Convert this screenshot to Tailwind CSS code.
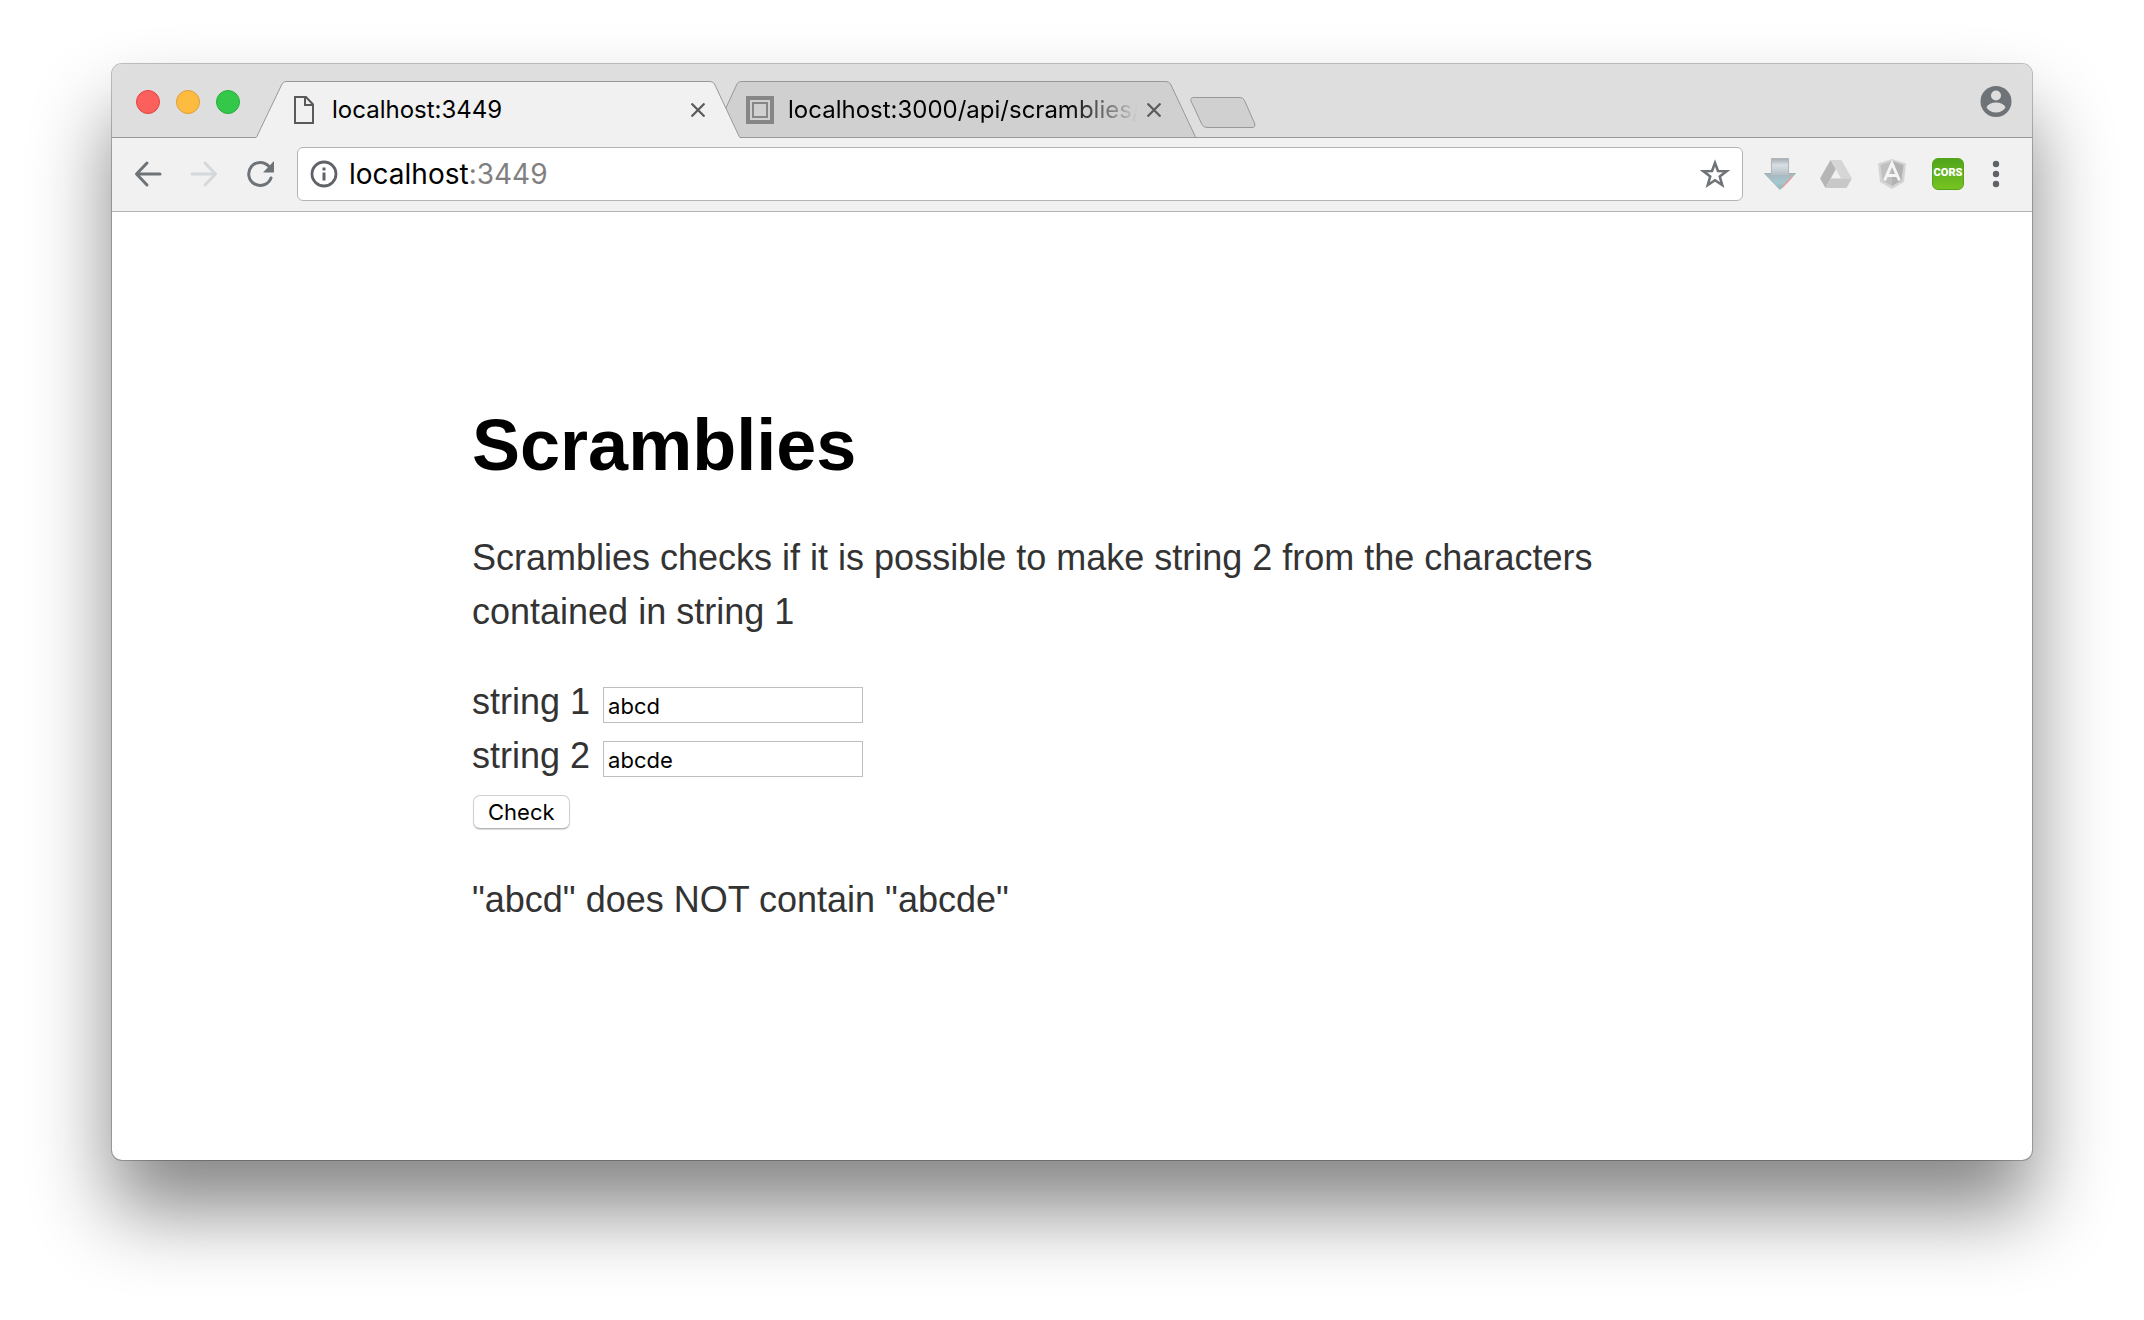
<!DOCTYPE html>
<html lang="en">
<head>
<meta charset="utf-8">
<title>Scramblies</title>
<script src="https://cdn.jsdelivr.net/npm/@tailwindcss/browser@4"></script>
</head>
<body class="min-h-screen bg-white px-28 pt-16 pb-40 font-['Inter',sans-serif]">
<div class="overflow-hidden rounded-[10px] bg-white shadow-[0_0_0_1px_rgba(0,0,0,0.24),0_50px_80px_rgba(0,0,0,0.48)]">

  <!-- Tab strip -->
  <header class="flex h-[74px] items-start border-b border-[#989898] bg-[#dedede]">
    <div class="flex h-[76px] shrink-0 items-center gap-4 pr-4 pl-6">
      <button type="button" aria-label="Close window" class="size-6 rounded-full border border-[#e0443f] bg-[#fc605c]"></button>
      <button type="button" aria-label="Minimize window" class="size-6 rounded-full border border-[#dfa035] bg-[#fdbc40]"></button>
      <button type="button" aria-label="Zoom window" class="size-6 rounded-full border border-[#2aac3c] bg-[#34c84a]"></button>
    </div>
    <nav class="mt-[17px] flex items-start" aria-label="Tabs">
      <div class="relative z-10 flex h-[57px] w-[484px] items-center pr-5 pl-[37px]">
        <svg class="absolute inset-0" width="484" height="57" viewBox="0 0 484 57" fill="none"><path d="M0 57L26 3Q27.500 .5 30 .5H454Q457 .5 458.500 3L484 57Z" fill="#f1f1f1"/><path d="M0 56.500Q1 56 2 53L26 3Q27.500 .5 30 .5H454Q457 .5 458.500 3L482 53Q483 56.500 485 56.500" stroke="#989898"/></svg>
        <svg class="relative shrink-0" width="22" height="28" viewBox="0 0 22 28" fill="none" stroke="#5a5a5a" stroke-width="2"><path d="M2 1H13L20 8.500V27H2Z"/><path d="M12 1V9H20"/></svg>
        <a href="#" class="relative ml-[17px] flex-1 truncate text-2xl text-black">localhost:3449</a>
        <button type="button" aria-label="Close tab" class="relative mr-1.5 flex size-8 items-center justify-center"><svg width="14" height="14" viewBox="0 0 14 14" stroke="#5a5a5a" stroke-width="2.200"><path d="M.5 .5L13.500 13.500M13.500 .5L.5 13.500"/></svg></button>
      </div>
      <div class="relative -ml-7 flex h-[57px] w-[484px] items-center pr-5 pl-[34px]">
        <svg class="absolute inset-0" width="484" height="57" viewBox="0 0 484 57" fill="none"><path d="M0 57L25 3Q26.500 .5 29 .5H454Q457 .5 458.500 3L484 57Z" fill="#d0d0d0" stroke="#989898"/><path d="M0 56.500H484" stroke="#989898"/></svg>
        <svg class="relative shrink-0" width="28" height="28" viewBox="0 0 28 28" fill="none"><path d="M2 2H26V26H2Z" stroke="#868686" stroke-width="4"/><path d="M7 7H21V21H7Z" stroke="#868686" stroke-width="2"/></svg>
        <a href="#" class="relative ml-[14px] flex-1 overflow-hidden mask-r-from-80% text-2xl whitespace-nowrap text-black">localhost:3000/api/scramblies/</a>
        <button type="button" aria-label="Close tab" class="relative mr-1.5 flex size-8 items-center justify-center"><svg width="14" height="14" viewBox="0 0 14 14" stroke="#5a5a5a" stroke-width="2.200"><path d="M.5 .5L13.500 13.500M13.500 .5L.5 13.500"/></svg></button>
      </div>
      <button type="button" aria-label="New tab" class="mt-4 -ml-1.5"><svg width="66" height="31" viewBox="0 0 66 31" fill="#d0d0d0" stroke="#989898"><path d="M4 .5H50Q53 .5 54.500 3.500L64.500 26Q66 30.500 62 30.500H17Q13.500 30.500 12 27.500L1 4Q0 .5 4 .5Z"/></svg></button>
    </nav>
    <button type="button" aria-label="Profile" class="mt-[22px] mr-5 ml-auto"><svg width="32" height="32" viewBox="0 0 32 32"><circle cx="16" cy="15.500" r="15.500" fill="#6e7378"/><circle cx="16" cy="9.500" r="5" fill="#dedede"/><path d="M6.500 21.500Q9 16.500 16 16.500T25.500 21.500Q22 26.500 16 26.500T6.500 21.500Z" fill="#dedede"/></svg></button>
  </header>

  <!-- Toolbar -->
  <div class="flex h-[74px] items-center border-b border-[#b4b4b4] bg-[#f1f1f1] pr-6 pb-0.5 pl-[22px]">
    <div class="flex gap-7">
      <button type="button" aria-label="Back"><svg width="28" height="28" viewBox="0 0 28 28" fill="none" stroke="#6e7378" stroke-width="3" stroke-linecap="round" stroke-linejoin="round"><path d="M26 14H3M13 3L2.500 14L13 25"/></svg></button>
      <button type="button" aria-label="Forward"><svg width="28" height="28" viewBox="0 0 28 28" fill="none" stroke="#d5d8da" stroke-width="3" stroke-linecap="round" stroke-linejoin="round"><path d="M2 14H25M15 3L25.500 14L15 25"/></svg></button>
      <button type="button" aria-label="Reload"><svg width="28" height="28" viewBox="0 0 28 28" fill="none"><path d="M23 6.500A11.500 11.500 0 1 0 25 18" stroke="#6e7378" stroke-width="3" stroke-linecap="round"/><path d="M28 1V12.500H17Z" fill="#6e7378"/></svg></button>
    </div>
    <div class="mr-[21px] ml-[23px] flex h-[54px] flex-1 items-center rounded-md border border-[#b4b4b4] bg-white px-3">
      <svg class="shrink-0" width="28" height="28" viewBox="0 0 28 28" fill="none"><circle cx="14" cy="14" r="12" stroke="#5f6368" stroke-width="2.800"/><path d="M14 12.500V20.500M14 7.500V10.500" stroke="#5f6368" stroke-width="3"/></svg>
      <a href="#" class="ml-[11px] flex-1 text-[28px] leading-9 text-black">localhost<span class="text-[#808080]">:3449</span></a>
      <button type="button" aria-label="Bookmark this page"><svg width="30" height="30" viewBox="0 0 30 30" fill="none" stroke="#6e7378" stroke-width="2.600"><path d="M15 4L18 12L26.500 12.300L19.800 17.500L22.200 26L15 21.200L7.800 26L10.200 17.500L3.500 12.300L12 12Z"/></svg></button>
    </div>
    <div class="flex gap-6">
      <button type="button" aria-label="Downloads"><svg width="32" height="32" viewBox="0 0 32 32"><defs><linearGradient id="shaft" x1="0" y1="0" x2="0" y2="1"><stop offset="0" stop-color="#a3acb2"/><stop offset=".4" stop-color="#d9e0e4"/><stop offset="1" stop-color="#b4c0c6"/></linearGradient><linearGradient id="head" x1="0" y1="0" x2="0" y2="1"><stop offset="0" stop-color="#a9b6bb"/><stop offset=".6" stop-color="#a3c9d0"/><stop offset="1" stop-color="#84b6be"/></linearGradient></defs><path d="M.5 15.500H31.500L16 31.500Z" fill="url(#head)" stroke="#a5b3b8"/><path d="M7.500 .5H24.500V17H7.500Z" fill="url(#shaft)"/><path d="M7.500 15.500V.5H24.500V15.500" fill="none" stroke="#adb7bc"/><path d="M28 19L18 29.500" stroke="#ec9a9a" stroke-width="1.500"/></svg></button>
      <button type="button" aria-label="Drive"><svg width="32" height="32" viewBox="0 0 32 32"><path d="M10.500 2L16 11L5.500 30L0 20.500Z" fill="#b6b6b6"/><path d="M10.500 2H21.500L32 20.500H21L10.500 2Z" fill="#d6d6d6"/><path d="M11 20.500H32L26.500 30H5.500Z" fill="#c8c8c8"/><path d="M16 12L20.500 20H11.500Z" fill="#f1f1f1"/></svg></button>
      <button type="button" aria-label="Angular"><svg width="32" height="32" viewBox="0 0 32 32"><path d="M16 1L30 5.500L28 24L16 31L4 24L2 5.500Z" fill="#d4d4d4"/><path d="M16 3L27.500 7L25.500 22.500L16 28Z" fill="#b2b2b2"/><path d="M16 3L4.500 7L6.500 22.500L16 28Z" fill="#c0c0c0"/><path d="M8.500 22.500L16 5.500L23.500 22.500M11.500 17.500H20.500" fill="none" stroke="#f5f5f5" stroke-width="3"/></svg></button>
      <button type="button" aria-label="CORS" class="flex size-8 items-center justify-center rounded-md border border-[#55a51c] bg-linear-to-b from-[#4fa51b] to-[#77c322] font-['Roboto',sans-serif] text-[11px] font-black text-white">CORS</button>
    </div>
    <button type="button" aria-label="Menu" class="ml-5"><svg width="24" height="32" viewBox="0 0 24 32" fill="#5f6368"><circle cx="12" cy="6" r="3.200"/><circle cx="12" cy="16" r="3.200"/><circle cx="12" cy="26" r="3.200"/></svg></button>
  </div>

  <!-- Page -->
  <main class="mx-auto max-w-[1200px] pt-[197px] pb-[233px] font-['Liberation_Sans',sans-serif] text-4xl leading-[54px] text-[#333]">
    <h1 class="text-7xl font-bold text-black">Scramblies</h1>
    <p class="mt-[50px]">Scramblies checks if it is possible to make string 2 from the characters contained in string 1</p>
    <form class="mt-9">
      <div class="flex gap-[13px]">
        <label for="s1">string 1</label>
        <input id="s1" type="text" value="abcd" class="mt-3 h-9 w-[260px] border border-[#bebebe] px-1 pt-0.5 font-['Inter',sans-serif] text-[22px] leading-7 text-black">
      </div>
      <div class="flex gap-[13px]">
        <label for="s2">string 2</label>
        <input id="s2" type="text" value="abcde" class="mt-3 h-9 w-[260px] border border-[#bebebe] px-1 pt-0.5 font-['Inter',sans-serif] text-[22px] leading-7 text-black">
      </div>
      <div class="flex h-[54px] items-start">
        <button type="button" class="mt-3 ml-px h-[34px] rounded-[7px] border border-[#cfcfcf] border-b-[#b4b4b4] bg-white px-[14px] font-['Inter',sans-serif] text-[22px] leading-8 text-black shadow-[0_1px_1px_rgba(0,0,0,0.15)]">Check</button>
      </div>
    </form>
    <p class="mt-9">"abcd" does NOT contain "abcde"</p>
  </main>
</div>
</body>
</html>
